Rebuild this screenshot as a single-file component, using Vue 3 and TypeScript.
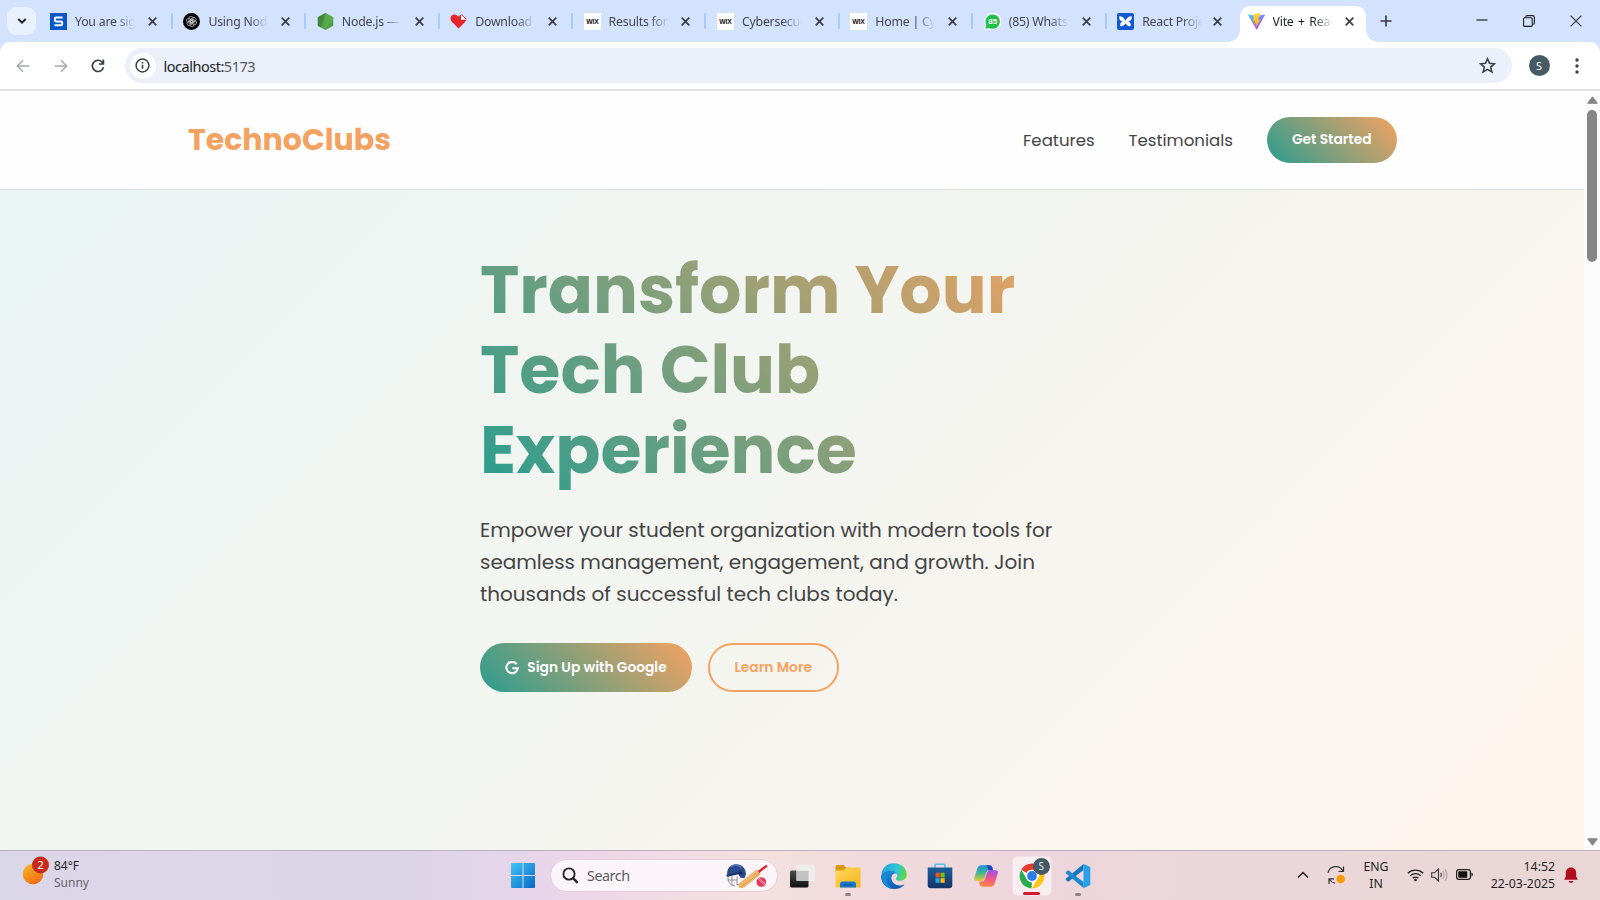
<script setup lang="ts">
interface Tab {
  title: string
  icon: string
}

const tabs: Tab[] = [
  { title: 'You are signed', icon: 's' },
  { title: 'Using Node.js', icon: 'gpt' },
  { title: 'Node.js — Run', icon: 'node' },
  { title: 'Download the', icon: 'heart' },
  { title: 'Results for se', icon: 'wix' },
  { title: 'Cybersecurity', icon: 'wix' },
  { title: 'Home | Cyber', icon: 'wix' },
  { title: '(85) WhatsApp', icon: 'wa' },
  { title: 'React Project', icon: 'react' },
  { title: 'Vite + React', icon: 'vite' },
]
</script>

<template>
  <div class="screen">
    <header class="strip">
      <button class="tab-search">
        <svg width="12" height="12" viewBox="0 0 12 12"><path d="M2.300 4l3.700 3.700L9.700 4" fill="none" stroke="#1f2227" stroke-width="2" /></svg>
      </button>
      <div class="tabs">
        <div v-for="(tab, i) in tabs" :key="i" class="tab" :class="{ active: i === 9, nosep: i === 8 }">
          <svg class="fav" width="17" height="17" viewBox="0 0 17 17">
            <g v-if="tab.icon === 's'">
              <rect width="17" height="17" fill="#0b57c9" />
              <path d="M12.600 4.600H6.200q-1.400 0-1.400 1.300v1.200q0 1.300 1.400 1.300h4.600q1.400 0 1.400 1.300v1.200q0 1.400-1.400 1.400H4.400" fill="none" stroke="#fff" stroke-width="2" />
            </g>
            <g v-else-if="tab.icon === 'gpt'">
              <circle cx="8.500" cy="8.500" r="8.500" fill="#050505" />
              <g fill="none" stroke="#c4c4c4" stroke-width=".7">
                <rect v-for="a in 6" :key="a" x="6" y="3.300" width="4" height="6.400" rx="2" :transform="`rotate(${a * 60} 8.5 8.5)`" />
              </g>
            </g>
            <g v-else-if="tab.icon === 'node'">
              <path d="M8.500 0l7.700 4.300v8.500L8.500 17 .8 12.800V4.300z" fill="#4fa044" />
              <path d="M8.500 0L.8 4.300v8.500l3 1.700z" fill="#3f873f" />
              <path d="M8.500 0l7.700 4.300v3L7 16.200z" fill="#62b152" opacity=".6" />
            </g>
            <g v-else-if="tab.icon === 'heart'">
              <path d="M8.500 15.500L1.600 8.600C-.8 5.500 1 1.500 4.300 1.500c2 0 3.300 1 4.200 2.300 1-1.500 2.300-2.300 3.600-2.300L16.500 6c0 1.200-.6 2.100-1.500 3z" fill="#e3262b" />
              <path d="M11 1.600v5.200h5.300z" fill="#fff" />
            </g>
            <g v-else-if="tab.icon === 'wix'">
              <rect width="17" height="17" fill="#fff" />
              <text x="8.500" y="11" font-family="Liberation Sans, sans-serif" font-weight="bold" font-size="6.800" text-anchor="middle" fill="#111" textLength="12.500">WIX</text>
            </g>
            <g v-else-if="tab.icon === 'wa'">
              <path d="M0 17l1.300-4.600A8.500 8.500 0 1 1 5 16z" fill="#fff" />
              <path d="M1.300 15.700l1-3.600A7.200 7.200 0 1 1 5.200 15z" fill="#1fc14b" />
              <text x="8.700" y="11.300" font-family="Liberation Sans, sans-serif" font-weight="bold" font-size="8" text-anchor="middle" fill="#fff">85</text>
            </g>
            <g v-else-if="tab.icon === 'react'">
              <rect width="17" height="17" rx="2" fill="#0f5ad0" />
              <path d="M8.500 8C7.500 5.300 5 3.200 2.300 3.300c-.5 2.700.7 4.600 3 5.200M8.500 8C9.500 5.300 12 3.200 14.700 3.300c.5 2.700-.7 4.600-3 5.200" fill="#fff" />
              <path d="M8.500 7.500L6 8.300c-2 .8-3.400 2.300-2.600 4.800 2.300.8 3.500-.6 5.100-2.600 1.600 2 2.800 3.400 5.100 2.600.8-2.500-.6-4-2.600-4.800z" fill="#fff" />
            </g>
            <g v-else>
              <defs>
                <linearGradient id="va" x1="0" y1="0" x2=".7" y2="1"><stop offset="0" stop-color="#41d1ff" /><stop offset="1" stop-color="#bd34fe" /></linearGradient>
                <linearGradient id="vb" x1=".4" y1="0" x2=".6" y2="1"><stop offset="0" stop-color="#ffdd35" /><stop offset="1" stop-color="#ffa800" /></linearGradient>
              </defs>
              <path d="M.3 2.300l7.900 14c.2.300.6.300.8 0L16.800 2.300c.2-.4-.1-.8-.5-.7L8.500 3 .8 1.600c-.5-.1-.8.3-.5.7z" fill="url(#va)" />
              <path d="M12.300 0L5.700 1.300l-.5 7.200 2-.4-.6 2.700 1.500-.3-.6 4.500 4.800-8.500-2 .3z" fill="url(#vb)" />
            </g>
          </svg>
          <span class="tab-title">{{ tab.title }}</span>
          <svg class="tab-x" width="9" height="9" viewBox="0 0 9 9"><path d="M.7.7l7.600 7.600M8.300.7L.7 8.300" /></svg>
        </div>
      </div>
      <svg class="plus" width="12" height="12" viewBox="0 0 12 12"><path d="M6 .5v11M.5 6h11" stroke="#33373d" stroke-width="1.600" /></svg>
      <div class="winctl">
        <svg width="12" height="12" viewBox="0 0 12 12"><path d="M.5 5h11" stroke="#222" stroke-width="1.200" /></svg>
        <svg width="12" height="12" viewBox="0 0 12 12" fill="none" stroke="#222" stroke-width="1.100"><rect x=".6" y="2.800" width="8.600" height="8.600" rx="1" /><path d="M2.800 2.600V1.900q0-1.300 1.300-1.300h5.400q1.900 0 1.900 1.900v5.400q0 1.300-1.300 1.300h-.5" /></svg>
        <svg width="12" height="12" viewBox="0 0 12 12"><path d="M.6.6l10.800 10.800M11.400.6L.6 11.400" stroke="#333" stroke-width="1.100" /></svg>
      </div>
    </header>

    <div class="toolbar">
      <svg class="nav-ic" width="14" height="14" viewBox="0 0 14 14" fill="none" stroke="#a6a9ad" stroke-width="1.500"><path d="M13.200 7H1.500M7 1.200L1.300 7 7 12.800" /></svg>
      <svg class="nav-ic" width="14" height="14" viewBox="0 0 14 14" fill="none" stroke="#a6a9ad" stroke-width="1.500"><path d="M.8 7h11.700M7 1.200L12.700 7 7 12.800" /></svg>
      <svg class="nav-ic" width="14" height="14" viewBox="0 0 14 14" fill="none" stroke="#3c4043" stroke-width="1.700"><path d="M12.400 8.200A5.600 5.600 0 1 1 11 3L12.300 4.600M12.400.5v4.500H8" /></svg>
      <div class="omni">
        <span class="site">
          <svg width="15" height="15" viewBox="0 0 15 15"><circle cx="7.500" cy="7.500" r="6.400" fill="none" stroke="#3a3d41" stroke-width="1.500" /><path d="M7.500 6.800v4M7.500 3.900v1.600" stroke="#3a3d41" stroke-width="1.600" /></svg>
        </span>
        <span class="url">localhost:<em>5173</em></span>
        <svg class="star" width="17" height="17" viewBox="0 0 17 17"><path d="M8.500 1.800l2 4.500 4.900.5-3.700 3.300 1.100 4.800-4.300-2.500-4.300 2.500 1.100-4.800L1.600 6.800l4.900-.5z" fill="none" stroke="#3c4043" stroke-width="1.600" /></svg>
      </div>
      <span class="avatar">S</span>
      <svg class="dots" width="4" height="16" viewBox="0 0 4 16" fill="#3c4043"><circle cx="2" cy="2" r="1.700" /><circle cx="2" cy="8" r="1.700" /><circle cx="2" cy="14" r="1.700" /></svg>
    </div>

    <div class="viewport">
      <div class="page">
        <nav class="nav">
          <span class="logo">TechnoClubs</span>
          <a class="link l1">Features</a>
          <a class="link l2">Testimonials</a>
          <button class="cta">Get Started</button>
        </nav>
        <section class="hero">
          <h1>
            <span>Transform Your</span>
            <span>Tech Club</span>
            <span>Experience</span>
          </h1>
          <p>
            Empower your student organization with modern tools for<br />
            seamless management, engagement, and growth. Join<br />
            thousands of successful tech clubs today.
          </p>
          <div class="actions">
            <button class="primary">
              <svg width="14" height="14" viewBox="0 0 14 14"><path d="M11.700 3.100A5.700 5.700 0 1 0 12.800 7.300H7.400" fill="none" stroke="#fff" stroke-width="2.100" /></svg>
              <span>Sign Up with Google</span>
            </button>
            <button class="ghost">Learn More</button>
          </div>
        </section>
      </div>
      <div class="scroll">
        <svg width="11" height="8" viewBox="0 0 11 8"><path d="M5.500.8L10.300 7.300H.7z" fill="#868686" stroke="#868686" stroke-linejoin="round" /></svg>
        <div class="thumb"></div>
        <svg class="down" width="11" height="8" viewBox="0 0 11 8"><path d="M5.500 7.300L10.300.8H.7z" fill="#868686" stroke="#868686" stroke-linejoin="round" /></svg>
      </div>
    </div>

    <footer class="taskbar">
      <div class="weather">
        <svg width="32" height="32" viewBox="0 0 32 32">
          <defs><linearGradient id="sun" x1=".2" y1="0" x2=".8" y2="1"><stop offset="0" stop-color="#f6b52e" /><stop offset="1" stop-color="#f0660c" /></linearGradient></defs>
          <circle cx="13" cy="18" r="10.300" fill="url(#sun)" />
          <circle cx="20.500" cy="9" r="8.500" fill="#c42b1c" />
          <text x="20.500" y="13" text-anchor="middle" font-family="Noto Sans, sans-serif" font-size="11.500" fill="#fff">2</text>
        </svg>
        <div class="wtext"><span>84°F</span><span class="dim">Sunny</span></div>
      </div>

      <div class="center">
        <svg class="start" width="24" height="25" viewBox="0 0 24 25">
          <defs><linearGradient id="win" x1="0" y1="0" x2="1" y2="1"><stop offset="0" stop-color="#42c6f6" /><stop offset="1" stop-color="#0669c4" /></linearGradient></defs>
          <path d="M1 0h10.500v12H0V1q0-1 1-1zM12.500 0H23q1 0 1 1v11H12.500zM0 13h11.500v12H1q-1 0-1-1zM12.500 13H24v11q0 1-1 1H12.500z" fill="url(#win)" />
        </svg>
        <div class="search">
          <svg width="17" height="17" viewBox="0 0 17 17" fill="none" stroke="#25262a" stroke-width="1.900"><circle cx="7" cy="7" r="5.600" /><path d="M11 11l4.600 4.800" stroke-width="2.400" /></svg>
          <span>Search</span>
          <svg class="cricket" width="42" height="26" viewBox="0 0 42 26">
            <path d="M2.500 12.500q-1.500 4 .5 7t6 3.500M2 17h9M6 13v9M11 13.500v8.500l4-1.500" fill="none" stroke="#8d8f98" stroke-width="1" />
            <path d="M1.200 12C.5 5.500 4.500 1.500 10 1.200c6-.2 10 4.500 10 10l-1.500 4-4-.5-2.500-4z" fill="#2b4a8e" />
            <path d="M5 3.500q5-3 10.500.5" fill="none" stroke="#5b7bbd" stroke-width="1.300" />
            <path d="M.6 12.800l12-2.500" stroke="#1b3266" stroke-width="2" />
            <circle cx="14.500" cy="10" r="1.800" fill="#17295a" />
            <path d="M12.300 21L30.500 6.500l4.500 4.500L19 24q-3 1.800-5.500.8-2-1.300-1.200-3.800z" fill="#f0b56c" />
            <path d="M14.500 24L33 10.500" stroke="#dc9c50" stroke-width="1" />
            <path d="M32.500 9L41 2.600" stroke="#d8283a" stroke-width="2.400" />
            <circle cx="35.300" cy="19" r="4.800" fill="#e8365b" />
            <path d="M32.300 16l6 6M33.500 15.200l5.500 5.400" stroke="#fff" stroke-width=".9" stroke-dasharray="1.500 .7" />
          </svg>
        </div>
        <div class="slot">
          <svg width="26" height="26" viewBox="0 0 26 26">
            <defs><linearGradient id="tv" x1="0" y1="0" x2="0" y2="1"><stop offset="0" stop-color="#4a4a4a" /><stop offset="1" stop-color="#111" /></linearGradient></defs>
            <rect x="1" y="7.500" width="18.500" height="17" rx="1.500" fill="url(#tv)" /><rect x="7.300" y="1.500" width="18.500" height="16.500" rx="1.500" fill="#eee" opacity=".92" /><path d="M7.300 8h12.200v10H7.300z" fill="#b5b5b5" opacity=".7" />
          </svg>
        </div>
        <div class="slot run">
          <svg width="26" height="26" viewBox="0 0 26 26">
            <defs><linearGradient id="fo" x1="0" y1="0" x2="1" y2="1"><stop offset="0" stop-color="#ffd95c" /><stop offset="1" stop-color="#f5b21b" /></linearGradient></defs>
            <path d="M.5 3.500Q.5 2 2 2h6.500l2.500 2.500h3V9H.5z" fill="#d9980f" />
            <path d="M.5 7.500h8l3-3H24q1.500 0 1.500 1.500V24.500H.5z" fill="url(#fo)" />
            <path d="M5 24.500V21q0-2.500 2.500-2.500h11Q21 18.500 21 21v3.500z" fill="#1477c9" /><path d="M8.500 22h9" stroke="#0b4f94" stroke-width="1.200" />
          </svg>
        </div>
        <div class="slot">
          <svg width="26" height="26" viewBox="0 0 26 26">
            <defs>
              <linearGradient id="e1" x1="0" y1=".3" x2="1" y2=".5"><stop offset="0" stop-color="#1fa3e0" /><stop offset=".6" stop-color="#30c6d4" /><stop offset="1" stop-color="#61d83f" /></linearGradient>
              <linearGradient id="e2" x1="0" y1="0" x2="0" y2="1"><stop offset="0" stop-color="#1b8fdc" /><stop offset="1" stop-color="#1058b0" /></linearGradient>
            </defs>
            <path d="M.3 11.500C1 4.800 6.300.2 13 .2c7.500 0 12.800 5.300 12.800 11 0 4-3 6.500-6.600 6.500-3 0-4.400-1-4.400-1.800 0-.6 1.400-1.200 1.400-3.300 0-2.600-2.600-4.800-6-4.800C5 7.800 1.500 10 .3 11.500z" fill="url(#e1)" />
            <path d="M.2 13C.8 9.800 4.500 7.500 9.500 7.500c3 0 5.600 1 6.400 3.500-3.400-1.500-5.700 1.500-5.400 4.700.4 4 4.200 7 9 6.700 2-.2 3-.9 4-.9-2.300 3-6 4.500-10 4.500C6 26 .2 20.500.2 13z" fill="url(#e2)" />
            <path d="M.2 13C1.500 9.500 5.500 8 8.500 8.700 4.500 11.500 4 20 11.500 25.900 4.700 25.200-.2 19.700.2 13z" fill="#1787d6" />
          </svg>
        </div>
        <div class="slot">
          <svg width="26" height="26" viewBox="0 0 26 26">
            <defs><linearGradient id="st" x1="0" y1="0" x2="0" y2="1"><stop offset="0" stop-color="#1a5e9c" /><stop offset="1" stop-color="#163465" /></linearGradient></defs>
            <path d="M8 5V2.500Q8 1.200 9.300 1.200h7.400Q18 1.200 18 2.500V5" fill="none" stroke="#52bdea" stroke-width="1.600" />
            <path d="M.7 4.500h24.600V22q0 3.200-3.200 3.200H3.900Q.7 25.200.7 22z" fill="url(#st)" />
            <path d="M8.500 9.700h4.200v4.700H8.500z" fill="#f25022" /><path d="M13.500 9.700h4.200v4.700h-4.200z" fill="#7fba00" /><path d="M8.500 15.200h4.200v4.600H8.500z" fill="#22a6ee" /><path d="M13.500 15.200h4.200v4.600h-4.200z" fill="#ffb900" />
          </svg>
        </div>
        <div class="slot">
          <svg width="26" height="26" viewBox="0 0 26 26">
            <defs>
              <linearGradient id="c1" x1=".3" y1="0" x2=".3" y2="1"><stop offset="0" stop-color="#1f8fe6" /><stop offset=".5" stop-color="#3fb98c" /><stop offset="1" stop-color="#ecc93a" /></linearGradient>
              <linearGradient id="c2" x1=".6" y1="0" x2=".4" y2="1"><stop offset="0" stop-color="#a64bea" /><stop offset=".5" stop-color="#f0568c" /><stop offset="1" stop-color="#fb8a3c" /></linearGradient>
            </defs>
            <path d="M8 2.300h8.500q2 0 2.700 2l.8 3h-4q-2 0-2.700 2l-2 6.500q-.8 2.200-3 2.200H3.500q-3 0-2.200-3.300L4.500 5q.8-2.700 3.500-2.700z" fill="url(#c1)" />
            <path d="M18 23.700H9.500q-2 0-2.700-2L6 18.500h3q2 0 2.700-2l2.300-7q.8-2.200 3-2.200h5.500q3 0 2.200 3.300L21.500 21q-.8 2.700-3.500 2.700z" fill="url(#c2)" />
            <path d="M13.500 2.300h3q2 0 2.700 2l.8 3h-4.500z" fill="#2148b8" />
          </svg>
        </div>
        <div class="slot chrome">
          <svg width="26" height="26" viewBox="0 0 26 26">
            <circle cx="13" cy="13" r="12.400" fill="#fff" />
            <path d="M2.260 6.800A12.400 12.400 0 0 1 23.740 6.800H13a6.200 6.200 0 0 0-5.370 3.100z" fill="#e33b2e" />
            <path d="M2.260 6.800L7.630 16.100A6.200 6.200 0 0 0 13 19.200L12.500 25.400A12.400 12.400 0 0 1 2.260 6.800z" fill="#2da94f" />
            <path d="M23.740 6.800A12.400 12.400 0 0 1 12.500 25.400L18.370 16.100A6.200 6.200 0 0 0 18 6.800z" fill="#fdc616" />
            <circle cx="13" cy="13" r="6.200" fill="#fff" /><circle cx="13" cy="13" r="4.900" fill="#2f7de9" />
          </svg>
          <i class="badge">S</i>
        </div>
        <div class="slot run">
          <svg width="26" height="26" viewBox="0 0 26 26">
            <path d="M18.500 1v6L3.200 18.700.8 17v-1.300z" fill="#1475bd" />
            <path d="M18.500 25v-6L3.200 7.300.8 9v1.300z" fill="#1b8ad4" />
            <path d="M18.500.8L25.300 4v18l-6.800 3.200z" fill="#27a2ea" />
          </svg>
        </div>
      </div>

      <div class="tray">
        <svg class="t-chev" width="12" height="8" viewBox="0 0 12 8"><path d="M1 6.500l5-5 5 5" fill="none" stroke="#222" stroke-width="1.500" /></svg>
        <svg class="t-sync" width="19" height="20" viewBox="0 0 19 20"><path d="M1 8A8 8 0 0 1 16 6M16.500 1.500v5h-5M8 18.200A8 8 0 0 1 2.500 14.500M2 19v-5.200h5" fill="none" stroke="#333" stroke-width="1.200" /><circle cx="13.700" cy="14" r="4.300" fill="#fb9a09" /></svg>
        <div class="lang"><span>ENG</span><span>IN</span></div>
        <svg class="t-wifi" width="17" height="14" viewBox="0 0 17 14" fill="none" stroke="#222" stroke-width="1.300"><path d="M.8 5.300a11 11 0 0 1 15.400 0M3.200 7.900a7.500 7.500 0 0 1 10.600 0M5.600 10.300a4.100 4.100 0 0 1 5.800 0" /><circle cx="8.500" cy="12" r="1.300" fill="#222" stroke="none" /></svg>
        <svg class="t-vol" width="17" height="14" viewBox="0 0 17 14" fill="none" stroke="#333" stroke-width="1.100"><path d="M.7 4.800h2.800L7.500 1v12L3.500 9.200H.7z" /><path d="M9.700 4.800q1.500 2.200 0 4.400" /><path d="M11.800 3q2.800 4 0 8M14 1.200q4 5.800 0 11.600" stroke="#aaa0a0" /></svg>
        <svg class="t-bat" width="17" height="11" viewBox="0 0 17 11"><rect x=".6" y=".6" width="13.800" height="9.800" rx="2.300" fill="none" stroke="#222" stroke-width="1.200" /><rect x="2.300" y="2.300" width="9" height="6.400" rx=".8" fill="#111" /><path d="M15.400 3.500q1.500.3 1.500 2t-1.500 2z" fill="#222" /></svg>
        <div class="clock"><span>14:52</span><span>22-03-2025</span></div>
        <svg class="t-bell" width="14" height="17" viewBox="0 0 14 17"><path d="M7 .5c3.200 0 5.200 2.300 5.200 5.300v3.700l1.600 3.300H.2l1.600-3.300V5.800C1.800 2.800 3.800.5 7 .5zM4.500 14h5q-.6 2-2.500 2t-2.500-2z" fill="#b10e1c" /></svg>
      </div>
    </footer>
  </div>
</template>

<style>
html,
body {
  margin: 0;
  overflow: hidden;
}
</style>

<style scoped>
* {
  box-sizing: border-box;
}
.screen {
  width: 1600px;
  height: 900px;
  display: flex;
  flex-direction: column;
  overflow: hidden;
  font-family: 'Noto Sans', 'Open Sans', sans-serif;
  background: #d3e2fd;
}
button {
  border: 0;
  padding: 0;
  font-family: inherit;
}
svg {
  display: block;
  flex: none;
}
.strip {
  height: 42px;
  display: flex;
  align-items: center;
  flex: none;
}
.tab-search {
  width: 29px;
  height: 28px;
  margin-left: 7px;
  border-radius: 9px;
  background: #e9f0fe;
  display: flex;
  align-items: center;
  justify-content: center;
}
.tabs {
  display: flex;
  height: 42px;
  margin-left: 3px;
}
.tab {
  width: 133.400px;
  height: 36px;
  margin-top: 6px;
  padding: 0 15.500px 0 11px;
  display: flex;
  align-items: center;
  position: relative;
}
.tab::after {
  content: '';
  position: absolute;
  right: -0.500px;
  top: 7px;
  width: 2px;
  height: 16px;
  border-radius: 1px;
  background: #a9c9fa;
}
.tab.nosep {
  padding-right: 18px;
}
.tab.nosep::after,
.tab.active::after {
  display: none;
}
.tab .fav {
  margin-top: -6px;
}
.tab-title {
  width: 60px;
  margin: -5px 0 0 8px;
  overflow: hidden;
  white-space: nowrap;
  font-size: 12.300px;
  letter-spacing: -0.220px;
  line-height: 20px;
  color: #43474d;
  -webkit-mask-image: linear-gradient(90deg, #000 68%, transparent 100%);
  mask-image: linear-gradient(90deg, #000 68%, transparent 100%);
}
.tab-x {
  margin: -6px 0 0 auto;
  stroke: #3b3f45;
  stroke-width: 1.700;
}
.tab.active {
  width: 126px;
  background: #fff;
  border-radius: 10px 10px 0 0;
  padding: 0 12px 0 8px;
}
.tab.active .tab-title {
  color: #1f2227;
  word-spacing: 1.500px;
}
.tab.active::before {
  content: '';
  position: absolute;
  left: -12px;
  right: -12px;
  bottom: 0;
  height: 12px;
  background: radial-gradient(circle at 0 0, transparent 11.500px, #fff 12px) left / 12px 12px no-repeat,
    radial-gradient(circle at 100% 0, transparent 11.500px, #fff 12px) right / 12px 12px no-repeat;
}
.plus {
  margin-left: 14.500px;
}
.winctl {
  margin-left: auto;
  margin-right: 18px;
  display: flex;
  gap: 35px;
}
.toolbar {
  height: 49px;
  flex: none;
  display: flex;
  align-items: center;
  background: #fff;
  border-radius: 10px 10px 0 0;
  border-bottom: 2px solid #e2e4e4;
  padding: 0 21px 0 16px;
}
.nav-ic {
  margin-right: 23.500px;
}
.omni {
  width: 1387px;
  height: 35px;
  margin-left: -4px;
  border-radius: 18px;
  background: #ebf0fa;
  display: flex;
  align-items: center;
  padding: 0 16px 0 5px;
}
.site {
  width: 26px;
  height: 26px;
  border-radius: 50%;
  background: #fff;
  display: flex;
  align-items: center;
  justify-content: center;
}
.url {
  margin-left: 8px;
  font-size: 14.500px;
  letter-spacing: -0.480px;
  color: #202327;
}
.url em {
  font-style: normal;
  color: #55595e;
}
.star {
  margin-left: auto;
}
.avatar {
  width: 21px;
  height: 21px;
  margin-left: 17px;
  border-radius: 50%;
  background: #455a64;
  color: #fff;
  font-size: 11px;
  line-height: 21px;
  text-align: center;
}
.dots {
  margin-left: auto;
}
.viewport {
  height: 759px;
  flex: none;
  display: flex;
}
.page {
  width: 1584px;
  display: flex;
  flex-direction: column;
  font-family: Poppins, Inter, sans-serif;
}
.nav {
  height: 99px;
  flex: none;
  background: #fefefe;
  border-bottom: 1px solid #dde3e2;
  display: flex;
  align-items: center;
  padding: 0 187px 1px 188px;
}
.logo {
  font-size: 30px;
  line-height: 40px;
  font-weight: 700;
  color: #f4a261;
  margin-right: auto;
}
.link {
  font-size: 16.600px;
  margin-top: 1px;
  color: #444;
}
.l1 {
  width: 105.500px;
}
.l2 {
  width: 138px;
}
.cta {
  width: 130.500px;
  height: 46px;
  border-radius: 23px;
  background: linear-gradient(45deg, #2a9d8f, #f4a261);
  color: #fff;
  font-size: 13.800px;
  font-weight: 600;
}
.hero {
  flex: 1;
  background: linear-gradient(135deg, #eaf5f4, #f4f5f0 50%, #fef4ed);
  padding: 60px 0 0 480px;
}
h1 {
  width: 600px;
  margin: 0;
  font-size: 66.600px;
  line-height: 80px;
  font-weight: 700;
  white-space: nowrap;
  color: transparent;
  background: linear-gradient(45deg, #2a9d8f, #f4a261);
  -webkit-background-clip: text;
  background-clip: text;
}
h1 span {
  display: block;
}
p {
  margin: 24px 0 0;
  font-size: 19.980px;
  line-height: 32px;
  white-space: nowrap;
  color: #444;
}
.actions {
  display: flex;
  margin-top: 33px;
}
.primary,
.ghost {
  height: 49px;
  border-radius: 25px;
  font-size: 13.800px;
  font-weight: 600;
  display: flex;
  align-items: center;
  justify-content: center;
}
.primary {
  width: 212px;
  gap: 8px;
  color: #fff;
  padding-top: 1px;
  background: linear-gradient(45deg, #2a9d8f, #f4a261);
}
.ghost {
  width: 130.500px;
  margin-left: 16px;
  padding-top: 1px;
  border: 2px solid #f4a261;
  background: transparent;
  color: #f4a261;
}
.scroll {
  width: 16px;
  background: #fcfcfc;
  display: flex;
  flex-direction: column;
  align-items: center;
  padding: 5px 0 4px;
}
.thumb {
  width: 10px;
  height: 152px;
  margin-top: 6px;
  border-radius: 5px;
  background: #868686;
}
.down {
  margin-top: auto;
}
.taskbar {
  flex: 1;
  border-top: 1px solid #b9b0ba;
  display: flex;
  background: linear-gradient(90deg, #dad7e9, #dcd6e8 13%, #dcd5e5 26%, #e2d6ea 30%, #ecd5e9 36%, #f1dce3 42%, #f3e0df 48%, #f1dadd 54%, #eed6dc 63%, #ebd7da 75%, #ebd6d6);
}
.weather {
  display: flex;
  width: 511px;
  padding: 5px 0 0 20px;
}
.wtext,
.lang,
.clock {
  display: flex;
  flex-direction: column;
  font-size: 12.300px;
  line-height: 17px;
  color: #1f1f23;
}
.wtext {
  margin: 1px 0 0 2px;
  font-size: 12px;
}
.wtext .dim {
  color: #66646e;
}
.center {
  display: flex;
  align-items: center;
  height: 49px;
}
.search {
  width: 228px;
  height: 33px;
  margin: 0 2px 0 14.500px;
  border-radius: 17px;
  background: #fbf5f9;
  border: 1px solid #e3d0da;
  display: flex;
  align-items: center;
  padding: 0 9px 0 11px;
  font-size: 14.300px;
  letter-spacing: -0.450px;
  color: #5c5a60;
}
.search span {
  margin: -1px 0 0 8.500px;
}
.cricket {
  margin-left: auto;
}
.slot {
  width: 45.900px;
  height: 40px;
  display: flex;
  align-items: center;
  justify-content: center;
  position: relative;
}
.run::after,
.chrome::after {
  content: '';
  position: absolute;
  bottom: 0;
  width: 6px;
  height: 3px;
  border-radius: 2px;
  background: #8b8085;
}
.chrome {
  width: 40px;
  margin: 0 2.900px;
  border-radius: 5px;
  background: #f8edf0;
  border: 1px solid #f0e2e6;
}
.chrome::after {
  width: 17px;
  background: #d01c30;
}
.badge {
  position: absolute;
  left: 20px;
  top: 1px;
  width: 17px;
  height: 17px;
  border-radius: 50%;
  background: #455a64;
  color: #e6eaec;
  font: normal 10px/17px 'Noto Sans', sans-serif;
  text-align: center;
}
.tray {
  margin-left: auto;
  display: flex;
  align-items: center;
  height: 47px;
  padding-right: 22px;
}
.t-bell {
  margin-top: 2px;
}
.t-sync {
  margin-left: 18px;
}
.lang {
  width: 40px;
  margin-left: 10px;
  align-items: center;
}
.t-wifi {
  margin-left: 11px;
}
.t-vol {
  margin-left: 7px;
}
.t-bat {
  margin-left: 8px;
}
.clock {
  width: 82px;
  align-items: flex-end;
}
.t-bell {
  margin-left: 9px;
}
</style>
